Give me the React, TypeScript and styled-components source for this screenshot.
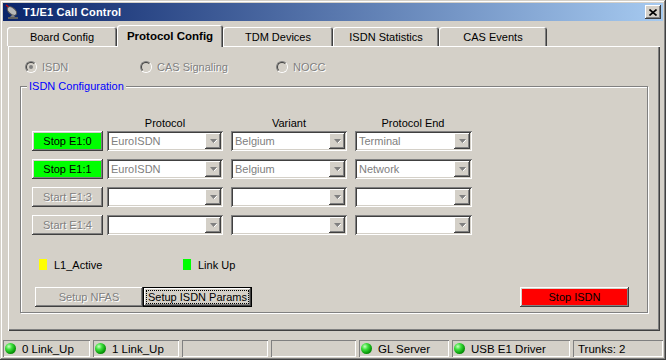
import React from "react";
import styled, { createGlobalStyle, css } from "styled-components";

const FACE = "#d4d0c8";

const GlobalStyle = createGlobalStyle`
  html, body { margin: 0; padding: 0; background: ${FACE}; }
  body { font-family: "Liberation Sans", Arial, sans-serif; font-size: 11px; color: #000; }
  * { box-sizing: border-box; }
`;

const raised = css`
  box-shadow: inset -1px -1px #404040, inset 1px 1px #fff, inset -2px -2px #808080, inset 2px 2px ${FACE};
`;

const Window = styled.div`
  width: 666px;
  height: 360px;
  padding: 3px;
  display: flex;
  flex-direction: column;
  background: ${FACE};
  box-shadow: inset -1px -1px #404040, inset 1px 1px ${FACE}, inset -2px -2px #808080, inset 2px 2px #fff;
`;

const TitleBar = styled.div`
  height: 18px;
  flex: 0 0 18px;
  display: flex;
  align-items: center;
  background: linear-gradient(to right, #0a246a, #a6caf0);
  color: #fff;
  font-weight: bold;
  font-size: 11px;
`;

const TitleIcon = styled.svg`
  width: 16px;
  height: 16px;
  margin: 0 2px 0 2px;
  flex: none;
`;

const TitleText = styled.span`
  flex: 1;
  letter-spacing: 0.2px;
`;

const CloseButton = styled.div`
  width: 16px;
  height: 14px;
  margin-right: 2px;
  background: ${FACE};
  ${raised};
  display: flex;
  align-items: center;
  justify-content: center;
`;

const TabStrip = styled.div`
  height: 25px;
  flex: 0 0 25px;
  display: flex;
  align-items: flex-start;
  padding-left: 4px;
`;

const Tab = styled.div<{ $w: number; $active?: boolean }>`
  width: ${(p) => p.$w}px;
  height: ${(p) => (p.$active ? 22 : 19)}px;
  margin-top: ${(p) => (p.$active ? 4 : 6)}px;
  position: relative;
  z-index: ${(p) => (p.$active ? 1 : 0)};
  background: ${FACE};
  border-radius: 3px 3px 0 0;
  box-shadow: inset 1px 1px #fff, inset -1px 0 #404040, inset -2px 0 #808080;
  display: flex;
  align-items: ${(p) => (p.$active ? "flex-start" : "center")};
  padding-top: ${(p) => (p.$active ? 5 : 0)}px;
  justify-content: center;
  font-weight: ${(p) => (p.$active ? "bold" : "normal")};
  font-size: ${(p) => (p.$active ? "11.5px" : "11px")};
`;

const Panel = styled.div`
  height: 285px;
  flex: 0 0 285px;
  margin: 0 3px 0 5px;
  display: flex;
  flex-direction: column;
  padding-top: 14px;
  box-shadow: inset 1px 1px #fff, inset -1px -1px #404040, inset -2px -2px #808080;
`;

const RadioRow = styled.div`
  height: 13px;
  display: flex;
  align-items: center;
  padding-left: 17px;
`;

const RadioItem = styled.div<{ $w?: number }>`
  width: ${(p) => (p.$w ? `${p.$w}px` : "auto")};
  display: flex;
  align-items: center;
  gap: 5px;
  color: #808080;
  text-shadow: 1px 1px #fff;
`;

const RadioOuter = styled.span`
  width: 12px;
  height: 12px;
  border-radius: 50%;
  border: 1px solid;
  border-color: #808080 #fff #fff #808080;
  display: flex;
`;

const RadioInner = styled.span<{ $checked?: boolean }>`
  width: 10px;
  height: 10px;
  border-radius: 50%;
  border: 1px solid;
  border-color: #404040 ${FACE} ${FACE} #404040;
  background: ${FACE};
  display: flex;
  align-items: center;
  justify-content: center;
  &::after {
    content: "";
    width: 4px;
    height: 4px;
    border-radius: 50%;
    background: ${(p) => (p.$checked ? "#808080" : "transparent")};
  }
`;

const GroupBox = styled.div`
  position: relative;
  margin: 13px 12px 0 12px;
  border: 1px solid #808080;
  box-shadow: inset 1px 1px #fff, 1px 1px #fff;
  padding: 30px 18px 5px 11px;
  display: flex;
  flex-direction: column;
`;

const GroupLabel = styled.span`
  position: absolute;
  top: -7px;
  left: 6px;
  padding: 0 2px;
  background: ${FACE};
  color: #0000ff;
  line-height: 13px;
`;

const Grid = styled.div`
  display: grid;
  grid-template-columns: 75px 124px 124px 117px;
  row-gap: 8px;
`;

const HeaderCell = styled.div`
  width: 116px;
  height: 13px;
  line-height: 13px;
  text-align: center;
  margin-bottom: -7px;
`;

const Button = styled.button<{ $w: number; $bg?: string; $disabled?: boolean; $default?: boolean }>`
  width: ${(p) => p.$w}px;
  height: 20px;
  padding: 0;
  border: none;
  font: inherit;
  font-size: 11px;
  background: ${(p) => p.$bg || FACE};
  color: ${(p) => (p.$disabled ? "#808080" : "#000")};
  text-shadow: ${(p) => (p.$disabled ? "1px 1px #fff" : "none")};
  ${(p) =>
    p.$default
      ? css`
          box-shadow: inset 0 0 0 1px #000, inset -2px -2px #404040, inset 2px 2px #fff,
            inset -3px -3px #808080;
        `
      : raised};
  display: flex;
  align-items: center;
  justify-content: center;
`;

const FocusRect = styled.span`
  outline: 1px dotted #000;
  outline-offset: 0px;
  padding: 0 1px;
  line-height: 12px;
`;

const Combo = styled.div`
  width: 116px;
  height: 20px;
  background: #fff;
  box-shadow: inset 1px 1px #808080, inset -1px -1px #fff, inset 2px 2px #404040, inset -2px -2px ${FACE};
  display: flex;
  align-items: center;
  padding: 2px;
`;

const ComboText = styled.span`
  flex: 1;
  padding-left: 2px;
  color: #808080;
  white-space: nowrap;
  overflow: hidden;
`;

const DropButton = styled.span`
  width: 16px;
  height: 16px;
  background: ${FACE};
  ${raised};
  display: flex;
  align-items: center;
  justify-content: center;
`;

const LegendRow = styled.div`
  display: flex;
  margin: 24px 0 0 7px;
  height: 11px;
  align-items: center;
`;

const LegendItem = styled.div<{ $w?: number }>`
  width: ${(p) => (p.$w ? `${p.$w}px` : "auto")};
  display: flex;
  align-items: center;
  gap: 7px;
`;

const Swatch = styled.span<{ $c: string }>`
  width: 8px;
  height: 11px;
  background: ${(p) => p.$c};
`;

const ActionRow = styled.div`
  display: flex;
  margin: 17px 0 0 3px;
`;

const Spacer = styled.div`
  flex: 1;
`;

const StatusBar = styled.div`
  margin-top: 9px;
  height: 17px;
  display: flex;
  gap: 3px;
`;

const StatusPane = styled.div<{ $w: number }>`
  width: ${(p) => p.$w}px;
  height: 17px;
  box-shadow: inset 1px 1px #808080, inset -1px -1px #fff;
  display: flex;
  align-items: center;
  gap: 6px;
  padding-left: ${(p) => 2}px;
  white-space: nowrap;
  font-size: 11.5px;
`;

const StatusText = styled.span<{ $pad?: number }>`
  padding-left: ${(p) => p.$pad ?? 0}px;
`;

const Led = styled.span`
  width: 11px;
  height: 11px;
  border-radius: 50%;
  background: radial-gradient(circle at 35% 32%, #c8ffc0 0, #3ee03e 30%, #0a9a0a 65%, #045a04 100%);
`;

const Arrow = () => (
  <svg width="7" height="5" viewBox="0 0 7 5">
    <path d="M0 0h7l-3.5 4z" fill="#808080" />
    <path d="M4 4L7 1" stroke="#fff" strokeWidth="1" />
  </svg>
);

const CloseGlyph = () => (
  <svg width="8" height="7" viewBox="0 0 8 7">
    <path d="M0.5 0.5L7.5 6.5M7.5 0.5L0.5 6.5" stroke="#000" strokeWidth="1.6" />
  </svg>
);

const DishIcon = () => (
  <TitleIcon viewBox="0 0 16 16">
    <path d="M1 1L6 5" stroke="#d00" strokeWidth="1.2" />
    <ellipse cx="7" cy="7" rx="5.5" ry="3.2" transform="rotate(40 7 7)" fill="#b8b8b8" stroke="#505050" strokeWidth="1" />
    <path d="M8 10l2 3h-5z" fill="#808080" />
    <rect x="3" y="13" width="10" height="2" fill="#606060" />
  </TitleIcon>
);

type Row = { label: string; bg?: string; disabled?: boolean; values: [string, string, string] };

const rows: Row[] = [
  { label: "Stop E1:0", bg: "#00ff00", values: ["EuroISDN", "Belgium", "Terminal"] },
  { label: "Stop E1:1", bg: "#00ff00", values: ["EuroISDN", "Belgium", "Network"] },
  { label: "Start E1:3", disabled: true, values: ["", "", ""] },
  { label: "Start E1:4", disabled: true, values: ["", "", ""] },
];

const tabs = [
  { label: "Board Config", w: 110 },
  { label: "Protocol Config", w: 106, active: true },
  { label: "TDM Devices", w: 110 },
  { label: "ISDN Statistics", w: 106 },
  { label: "CAS Events", w: 108 },
];

const panes = [
  { w: 87, led: true, text: "0 Link_Up" },
  { w: 86, led: true, text: "1 Link_Up" },
  { w: 86, text: "" },
  { w: 85, text: "" },
  { w: 90, led: true, text: "GL Server" },
  { w: 118, led: true, text: "USB E1 Driver" },
  { w: 90, text: "Trunks: 2" },
];

export default function App() {
  return (
    <>
      <GlobalStyle />
      <Window>
        <TitleBar>
          <DishIcon />
          <TitleText>T1/E1 Call Control</TitleText>
          <CloseButton>
            <CloseGlyph />
          </CloseButton>
        </TitleBar>
        <TabStrip>
          {tabs.map((t) => (
            <Tab key={t.label} $w={t.w} $active={t.active}>
              {t.label}
            </Tab>
          ))}
        </TabStrip>
        <Panel>
          <RadioRow>
            <RadioItem $w={115}>
              <RadioOuter>
                <RadioInner $checked />
              </RadioOuter>
              ISDN
            </RadioItem>
            <RadioItem $w={136}>
              <RadioOuter>
                <RadioInner />
              </RadioOuter>
              CAS Signaling
            </RadioItem>
            <RadioItem>
              <RadioOuter>
                <RadioInner />
              </RadioOuter>
              NOCC
            </RadioItem>
          </RadioRow>
          <GroupBox>
            <GroupLabel>ISDN Configuration</GroupLabel>
            <Grid>
              <div />
              <HeaderCell>Protocol</HeaderCell>
              <HeaderCell>Variant</HeaderCell>
              <HeaderCell>Protocol End</HeaderCell>
              {rows.map((r) => (
                <React.Fragment key={r.label}>
                  <Button $w={71} $bg={r.bg} $disabled={r.disabled}>
                    {r.label}
                  </Button>
                  {r.values.map((v, i) => (
                    <Combo key={i} style={i === 2 ? { width: 117 } : undefined}>
                      <ComboText>{v}</ComboText>
                      <DropButton>
                        <Arrow />
                      </DropButton>
                    </Combo>
                  ))}
                </React.Fragment>
              ))}
            </Grid>
            <LegendRow>
              <LegendItem $w={144}>
                <Swatch $c="#ffff00" />
                L1_Active
              </LegendItem>
              <LegendItem>
                <Swatch $c="#00ff00" />
                Link Up
              </LegendItem>
            </LegendRow>
            <ActionRow>
              <Button $w={108} $disabled>
                Setup NFAS
              </Button>
              <Button $w={109} $default>
                <FocusRect>Setup ISDN Params</FocusRect>
              </Button>
              <Spacer />
              <Button $w={109} $bg="#ff0000">
                Stop ISDN
              </Button>
            </ActionRow>
          </GroupBox>
        </Panel>
        <StatusBar>
          {panes.map((p, i) => (
            <StatusPane key={i} $w={p.w}>
              {p.led && <Led />}
              <StatusText $pad={p.led ? 0 : 3}>{p.text}</StatusText>
            </StatusPane>
          ))}
        </StatusBar>
      </Window>
    </>
  );
}
